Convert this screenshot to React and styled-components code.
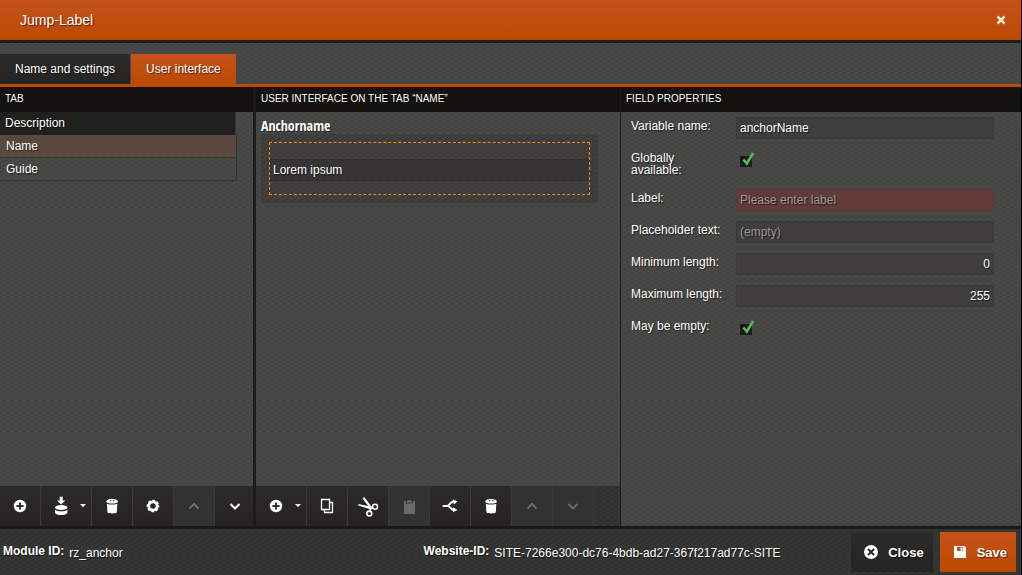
import React, { useState } from "react";
import styled, { createGlobalStyle, css } from "styled-components";

const GlobalStyle = createGlobalStyle`
  *, *::before, *::after { box-sizing: border-box; }
  body {
    margin: 0;
    color: #fff;
    background: #454545;
    font-family: "Liberation Sans", Arial, sans-serif;
    font-size: 12px;
    text-shadow: 1px 1px 1px rgba(0, 0, 0, 0.6);
  }
  button, input { font: inherit; color: inherit; text-shadow: inherit; margin: 0; border-radius: 0; }
`;

const weave = css`
  background-image:
    repeating-linear-gradient(30deg, rgba(0, 0, 0, 0.04) 0 2px, transparent 2px 4px),
    repeating-linear-gradient(-30deg, rgba(255, 255, 255, 0.02) 0 2px, transparent 2px 4px);
`;
const orange = css`background: linear-gradient(#c5521b, #bb4a01);`;
const dark = css`background: linear-gradient(#2c2b29, #252422);`;

const Window = styled.div`
  display: flex;
  flex-direction: column;
  min-height: 100vh;
  border-right: 1px solid #000;
  background-color: #464645;
  ${weave}
`;

const TitleBar = styled.header`
  ${orange}
  display: flex;
  align-items: center;
  justify-content: space-between;
  height: 43px;
  padding: 0 12px 0 20px;
  border-bottom: 3px solid #1e1e1d;
  background-clip: padding-box;
`;
const Title = styled.h1`
  margin: 0;
  font-size: 14px;
  font-weight: 400;
`;
const DismissButton = styled.button`
  display: flex;
  align-items: center;
  justify-content: center;
  width: 16px;
  height: 16px;
  padding: 0;
  border: 0;
  background: none;
  cursor: pointer;
`;

const Tabs = styled.nav`
  display: flex;
  gap: 1px;
  padding-top: 11px;
  border-bottom: 3px solid #bd4b03;
`;
const Tab = styled.button`
  ${(p) => (p.$active ? orange : dark)}
  height: 30px;
  padding: 0 15px;
  border: 0;
  cursor: pointer;
`;

const Columns = styled.main`
  flex: 1;
  display: grid;
  grid-template-columns: 256px minmax(0, 1fr) 400px;
`;
const Column = styled.section`
  display: flex;
  flex-direction: column;
  min-width: 0;
  border-right: ${(p) => p.$divider || 0}px solid #1c1b1a;
`;
const ColumnHead = styled.h2`
  margin: 0;
  padding: 0 5px 2px;
  background: #141210;
  font-size: 10px;
  line-height: 23px;
  font-weight: 400;
  text-transform: uppercase;
`;

const List = styled.div`
  flex: 1;
  padding-right: 16px;
`;
const ListHead = styled.div`
  margin-right: 1px;
  padding: 0 5px;
  border-right: 1px solid #363636;
  background: #20201f;
  line-height: 23px;
`;
const ListButton = styled.button`
  display: block;
  width: 100%;
  height: 23px;
  padding: 0 6px;
  border: 1px solid #363636;
  border-width: 0 1px 1px 0;
  background: ${(p) => (p.$active ? "#5a483f" : "transparent")};
  text-align: left;
  cursor: pointer;
`;

const Preview = styled.div`
  flex: 1;
  padding: 5px 22px 0 5px;
`;
const PreviewTitle = styled.label`
  display: block;
  font: 700 14px/17px "Open Sans Condensed", "Liberation Sans Narrow", "Liberation Sans", sans-serif;
`;
const PreviewBox = styled.div`
  padding: 8px;
  background-color: #3f3d3c;
  ${weave}
`;
const DashedFrame = styled.div`
  padding: 16px 0 13px;
  border: 1px dashed #f7860f;
`;
const PreviewInput = styled.input`
  display: block;
  width: 100%;
  height: 22px;
  padding: 0 3px;
  border: 1px solid #302f2e;
  border-width: 1px 0;
  background: #363434;
  outline: 0;
`;

const Form = styled.form`
  flex: 1;
  display: flex;
  flex-direction: column;
  gap: 10px;
  padding: 5px 27px 10px 10px;
`;
const FieldRow = styled.div`
  display: grid;
  grid-template-columns: 105px minmax(0, 1fr);
  align-items: start;
  min-height: 22px;
`;
const FieldLabel = styled.label`
  padding: 3px 8px 3px 0;
  line-height: 12px;
`;
const TextInput = styled.input`
  width: 100%;
  height: 22px;
  padding: 0 3px;
  border: 1px solid ${(p) => (p.$invalid ? "#5c3636" : "#3a3838")};
  background: ${(p) => (p.$invalid ? "#623a3a" : "#3f3d3d")};
  text-align: ${(p) => p.$align || "left"};
  outline: 0;
  &::placeholder { color: #999; opacity: 1; }
`;
const CheckHolder = styled.span`
  position: relative;
  display: block;
  width: 12px;
  height: 11px;
  margin: 7px 0 0 4px;
  svg {
    position: absolute;
    left: 2px;
    bottom: 1px;
    pointer-events: none;
  }
`;
const CheckInput = styled.input`
  appearance: none;
  display: block;
  width: 12px;
  height: 11px;
  background: #1b1a19;
  & + svg { display: none; }
  &:checked + svg { display: block; }
`;

const Toolbar = styled.div`
  display: flex;
  height: 40px;
  overflow: hidden;
  background-color: #323231;
  ${weave}
`;
const ToolButton = styled.button`
  flex: none;
  display: flex;
  align-items: center;
  justify-content: center;
  gap: 9px;
  width: 41px;
  padding: 0;
  border: 0;
  border-right: 1px solid #3a3938;
  color: #fff;
  ${dark}
  ${(p) => p.$menu && css`width: 51px; justify-content: flex-start; padding-left: 10px;`}
  &:disabled {
    color: #6b6a69;
    background: #323231;
  }
`;

const Footer = styled.footer`
  display: flex;
  align-items: center;
  gap: 7px;
  height: 49px;
  padding-right: 5px;
  border-top: 3px solid #1a1918;
  background-color: #333332;
  ${weave}
`;
const Info = styled.dl`
  flex: ${(p) => (p.$grow ? "1" : "0 0 41%")};
  display: flex;
  gap: 5px;
  margin: 0;
  min-width: 0;
  padding-left: ${(p) => (p.$grow ? 0 : 3)}px;
  line-height: 16px;
  white-space: nowrap;
  dt { font-weight: 700; }
  dd { margin: 0; padding-top: 2px; }
`;
const ActionButton = styled.button`
  ${(p) => (p.$primary ? orange : dark)}
  display: flex;
  align-items: center;
  gap: 9px;
  height: 40px;
  padding: 0 9px 0 12px;
  border: 0;
  font-size: 13px;
  font-weight: 700;
  cursor: pointer;
`;

const Svg = ({ w = 20, h = 20, children }) => (
  <svg width={w} height={h} viewBox={`0 0 ${w} ${h}`} fill="currentColor" aria-hidden="true">
    {children}
  </svg>
);
const stroke = { fill: "none", stroke: "currentColor" };

const PlusIcon = () => (
  <Svg>
    <path fillRule="evenodd" d="M10 3.800a6.200 6.200 0 1 0 0 12.400a6.200 6.200 0 0 0 0-12.400zM9.100 6.500h1.800v2.600h2.600v1.800h-2.600v2.600H9.100v-2.600H6.500V9.100h2.600z" />
  </Svg>
);
const StoreIcon = () => (
  <Svg>
    <path d="M8.700.7h3V4.500h2.600L10.200 8.500L6.100 4.500h2.600z" />
    <ellipse cx="10.200" cy="11.600" rx="6.200" ry="2.500" />
    <path d="M4 13.800c1.500 1.200 3.700 1.500 6.200 1.500s4.700-.3 6.200-1.500v2.700c0 1.500-2.800 2.600-6.200 2.600S4 18 4 16.500z" />
  </Svg>
);
const CaretIcon = () => (
  <Svg w={6} h={4}>
    <path d="M0 0h6L3 3.300z" />
  </Svg>
);
const TrashIcon = () => (
  <Svg>
    <path fillRule="evenodd" d="M4.300 5.600C4.300 3.900 6.900 3 10.100 3s5.800.9 5.800 2.600c0 1.400-2.600 2-5.800 2s-5.800-.6-5.800-2zM7.500 4.300l.9.900h.8l.3-.9zM10.700 4.300l.3.900h.8l.9-.9z" />
    <path d="M4.900 7.700c3 1.200 7.400 1.200 10.400 0l-.5 8.400c-.1.900-1 1.300-4.700 1.300s-4.600-.4-4.700-1.300z" />
  </Svg>
);
const GearIcon = () => (
  <Svg>
    <circle cx="10" cy="10" r="4.200" {...stroke} strokeWidth="2.800" />
    <circle cx="10" cy="10" r="5.500" {...stroke} strokeWidth="1.700" strokeDasharray="2.600 1.720" strokeDashoffset="1.300" />
  </Svg>
);
const UpIcon = () => (
  <Svg>
    <path d="M5.500 12.500L10 8l4.500 4.500" {...stroke} strokeWidth="2" />
  </Svg>
);
const DownIcon = () => (
  <Svg>
    <path d="M5.500 8l4.500 4.500L14.500 8" {...stroke} strokeWidth="2" />
  </Svg>
);
const CopyIcon = () => (
  <Svg>
    <path d="M4.500 3.500h8v10h-8zM13 6.500h2.500v10h-8V14" {...stroke} strokeWidth="1.300" />
  </Svg>
);
const ScissorsIcon = () => (
  <Svg w={22} h={22}>
    <path d="M5.500 3.200L7.200 2l7.800 10.300-1.400 4.200-1.500-.5.600-3z" />
    <path d="M1.200 9l.3 1.500 12.500 4 1.800-2.600z" />
    <circle cx="18" cy="11.700" r="2.500" {...stroke} strokeWidth="1.600" />
    <circle cx="12.300" cy="18.500" r="2.400" {...stroke} strokeWidth="1.600" />
  </Svg>
);
const PasteIcon = () => (
  <Svg>
    <path d="M5 5h2v2.500h7V5h2v13H5z" />
    <path d="M8 6.500V4.800h1.300a1.300 1.300 0 0 1 2.400 0H13v1.700z" />
  </Svg>
);
const BranchIcon = () => (
  <Svg>
    <path d="M2.700 10H7c2.500 0 3-4 6.500-4.400M7.500 10c2.500 0 3 3.400 6 3.900" {...stroke} strokeWidth="2" />
    <path d="M12.800 3.200l4.700 2.300-3.600 2.900zM13.300 11.200l4.200 2.900-4.600 2.200z" />
  </Svg>
);
const CrossIcon = () => (
  <Svg w={16} h={16}>
    <path d="M4.500 4.500l7 7M11.500 4.500l-7 7" {...stroke} stroke="#fbe0cc" strokeWidth="2.500" />
  </Svg>
);
const CloseIcon = () => (
  <Svg w={16} h={16}>
    <circle cx="8" cy="8" r="7" />
    <path d="M5 5l6 6M11 5l-6 6" stroke="#282725" strokeWidth="2" />
  </Svg>
);
const SaveIcon = () => (
  <Svg w={16} h={16}>
    <path fillRule="evenodd" d="M2 2h10.500L14 3.500V14H2zM5 3v4h6V3zM8.500 3.500h2v3h-2z" />
  </Svg>
);
const CheckMark = () => (
  <svg width="13" height="14" viewBox="0 0 13 14" aria-hidden="true">
    <path d="M1.400 7.500l3.400 4L11.200 1" fill="none" stroke="#56b35c" strokeWidth="2.700" />
  </svg>
);

const Tool = ({ label, menu, disabled, children }) => (
  <ToolButton type="button" aria-label={label} $menu={menu} disabled={disabled}>
    {children}
    {menu && <CaretIcon />}
  </ToolButton>
);

const TextField = ({ id, label, ...rest }) => (
  <FieldRow>
    <FieldLabel htmlFor={id}>{label}</FieldLabel>
    <TextInput id={id} type="text" {...rest} />
  </FieldRow>
);

const CheckField = ({ id, label }) => (
  <FieldRow>
    <FieldLabel htmlFor={id}>{label}</FieldLabel>
    <CheckHolder>
      <CheckInput id={id} type="checkbox" defaultChecked />
      <CheckMark />
    </CheckHolder>
  </FieldRow>
);

export default function App() {
  const [tab, setTab] = useState("User interface");
  const [item, setItem] = useState("Name");

  return (
    <Window>
      <GlobalStyle />
      <TitleBar>
        <Title>Jump-Label</Title>
        <DismissButton type="button" aria-label="Dismiss"><CrossIcon /></DismissButton>
      </TitleBar>

      <Tabs>
        {["Name and settings", "User interface"].map((name) => (
          <Tab key={name} type="button" $active={name === tab} onClick={() => setTab(name)}>
            {name}
          </Tab>
        ))}
      </Tabs>

      <Columns>
        <Column $divider={3}>
          <ColumnHead>Tab</ColumnHead>
          <List>
            <ListHead>Description</ListHead>
            {["Name", "Guide"].map((name) => (
              <ListButton key={name} type="button" $active={name === item} onClick={() => setItem(name)}>
                {name}
              </ListButton>
            ))}
          </List>
          <Toolbar>
            <Tool label="Add tab"><PlusIcon /></Tool>
            <Tool label="Store" menu><StoreIcon /></Tool>
            <Tool label="Delete tab"><TrashIcon /></Tool>
            <Tool label="Settings"><GearIcon /></Tool>
            <Tool label="Move tab up" disabled><UpIcon /></Tool>
            <Tool label="Move tab down"><DownIcon /></Tool>
          </Toolbar>
        </Column>

        <Column $divider={1}>
          <ColumnHead>User interface on the tab “Name”</ColumnHead>
          <Preview>
            <PreviewTitle htmlFor="anchor">Anchorname</PreviewTitle>
            <PreviewBox>
              <DashedFrame>
                <PreviewInput id="anchor" type="text" defaultValue="Lorem ipsum" />
              </DashedFrame>
            </PreviewBox>
          </Preview>
          <Toolbar>
            <Tool label="Add field" menu><PlusIcon /></Tool>
            <Tool label="Copy"><CopyIcon /></Tool>
            <Tool label="Cut"><ScissorsIcon /></Tool>
            <Tool label="Paste" disabled><PasteIcon /></Tool>
            <Tool label="Branch"><BranchIcon /></Tool>
            <Tool label="Delete field"><TrashIcon /></Tool>
            <Tool label="Move field up" disabled><UpIcon /></Tool>
            <Tool label="Move field down" disabled><DownIcon /></Tool>
          </Toolbar>
        </Column>

        <Column>
          <ColumnHead>Field properties</ColumnHead>
          <Form>
            <TextField id="variable" label="Variable name:" defaultValue="anchorName" />
            <CheckField id="global" label="Globally available:" />
            <TextField id="label" label="Label:" placeholder="Please enter label" $invalid />
            <TextField id="placeholder" label="Placeholder text:" placeholder="(empty)" />
            <TextField id="min" label="Minimum length:" defaultValue="0" $align="right" />
            <TextField id="max" label="Maximum length:" defaultValue="255" $align="right" />
            <CheckField id="empty" label="May be empty:" />
          </Form>
        </Column>
      </Columns>

      <Footer>
        <Info>
          <dt>Module ID:</dt>
          <dd>rz_anchor</dd>
        </Info>
        <Info $grow>
          <dt>Website-ID:</dt>
          <dd>SITE-7266e300-dc76-4bdb-ad27-367f217ad77c-SITE</dd>
        </Info>
        <ActionButton type="button"><CloseIcon />Close</ActionButton>
        <ActionButton type="button" $primary><SaveIcon />Save</ActionButton>
      </Footer>
    </Window>
  );
}
